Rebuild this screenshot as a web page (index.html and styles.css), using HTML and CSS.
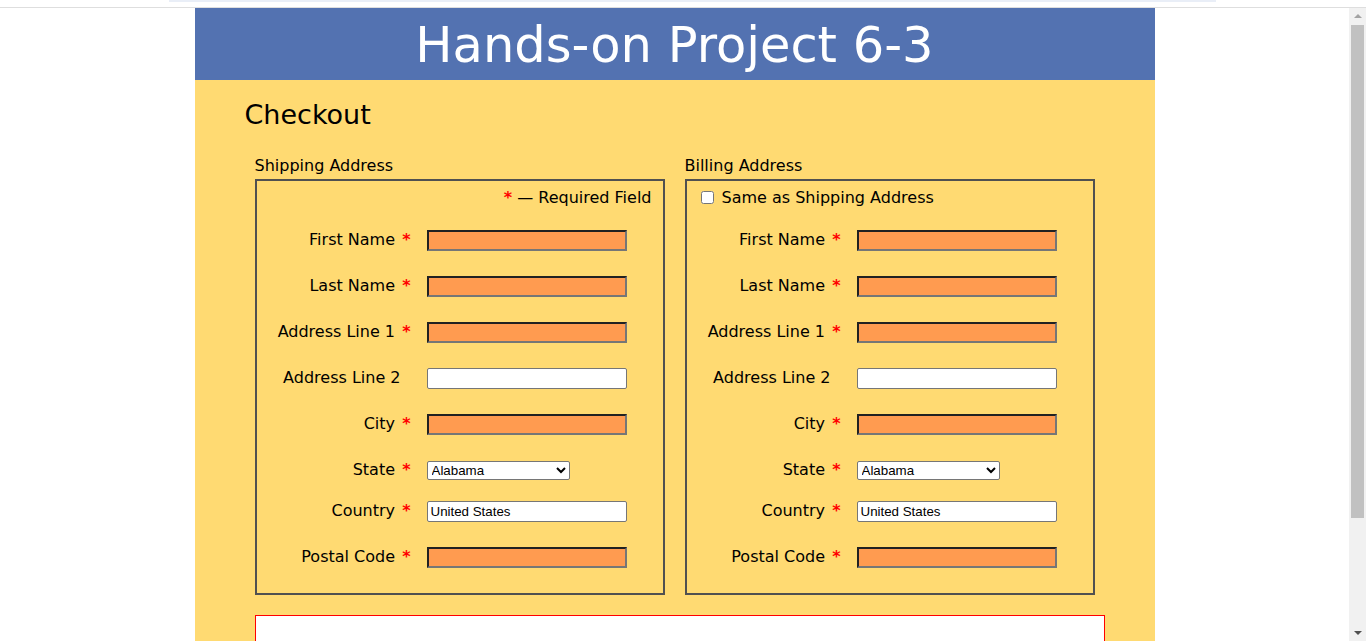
FILE: index.html
```html
<!DOCTYPE html>
<html lang="en">
<head>
<meta charset="utf-8">
<title>Hands-on Project 6-3</title>
<link rel="stylesheet" href="styles.css">
</head>
<body>
<div class="chrome"><div class="chrome-strip"></div></div>
<div class="viewport">
  <div class="page">
    <header class="banner">
      <h1>Hands-on Project 6-3</h1>
    </header>
    <main class="content">
      <h2 class="title">Checkout</h2>
      <form class="columns">
        <section class="col">
          <div class="legend">Shipping Address</div>
          <fieldset class="box">
            <div class="note"><span class="req">*</span> — Required Field</div>
            <div class="row"><label class="lbl">First Name <span class="req mark">*</span></label><input class="field invalid" type="text"></div>
            <div class="row"><label class="lbl">Last Name <span class="req mark">*</span></label><input class="field invalid" type="text"></div>
            <div class="row"><label class="lbl">Address Line 1 <span class="req mark">*</span></label><input class="field invalid" type="text"></div>
            <div class="row"><label class="lbl opt">Address Line 2</label><input class="field" type="text"></div>
            <div class="row"><label class="lbl">City <span class="req mark">*</span></label><input class="field invalid" type="text"></div>
            <div class="row row-select"><label class="lbl">State <span class="req mark">*</span></label><select class="state"><option>Alabama</option></select></div>
            <div class="row"><label class="lbl">Country <span class="req mark">*</span></label><input class="field" type="text" value="United States"></div>
            <div class="row row-last"><label class="lbl">Postal Code <span class="req mark">*</span></label><input class="field invalid" type="text"></div>
          </fieldset>
        </section>
        <section class="col">
          <div class="legend">Billing Address</div>
          <fieldset class="box">
            <div class="note note-check"><input class="check" type="checkbox"><span>Same as Shipping Address</span></div>
            <div class="row"><label class="lbl">First Name <span class="req mark">*</span></label><input class="field invalid" type="text"></div>
            <div class="row"><label class="lbl">Last Name <span class="req mark">*</span></label><input class="field invalid" type="text"></div>
            <div class="row"><label class="lbl">Address Line 1 <span class="req mark">*</span></label><input class="field invalid" type="text"></div>
            <div class="row"><label class="lbl opt">Address Line 2</label><input class="field" type="text"></div>
            <div class="row"><label class="lbl">City <span class="req mark">*</span></label><input class="field invalid" type="text"></div>
            <div class="row row-select"><label class="lbl">State <span class="req mark">*</span></label><select class="state"><option>Alabama</option></select></div>
            <div class="row"><label class="lbl">Country <span class="req mark">*</span></label><input class="field" type="text" value="United States"></div>
            <div class="row row-last"><label class="lbl">Postal Code <span class="req mark">*</span></label><input class="field invalid" type="text"></div>
          </fieldset>
        </section>
      </form>
      <div class="payment"></div>
    </main>
  </div>
  <div class="scrollbar">
    <span class="arrow arrow-up"></span>
    <div class="thumb"></div>
    <span class="arrow arrow-down"></span>
  </div>
</div>
</body>
</html>
```
FILE: styles.css
```css
html, body {
  margin: 0;
  padding: 0;
  height: 100%;
  overflow: hidden;
  background: #ffffff;
}

body {
  font-family: "DejaVu Sans", Verdana, sans-serif;
  font-size: 16px;
  color: #000;
}

.chrome {
  height: 7px;
  border-bottom: 1px solid #dedede;
  background: #fff;
  padding-left: 169px;
}

.chrome-strip {
  width: 1047px;
  height: 2px;
  background: #e9eef7;
}

.viewport {
  display: flex;
  height: 633px;
}

.page {
  flex: 1;
  overflow: hidden;
}

.banner {
  width: 960px;
  margin: 0 auto;
  background: #5372b1;
}

.banner h1 {
  margin: 0;
  padding: 9px 0 7px 0;
  font-size: 49.5px;
  line-height: 56px;
  font-weight: normal;
  color: #fff;
  text-align: center;
}

.content {
  width: 960px;
  margin: 0 auto;
  background: #ffda72;
  padding: 20px 50px 0 50px;
  box-sizing: border-box;
  height: 600px;
}

.title {
  margin: 0;
  font-size: 27px;
  line-height: 30px;
  font-weight: normal;
}

.columns {
  display: grid;
  grid-template-columns: 410px 410px;
  column-gap: 20px;
  margin: 26px 0 0 10px;
}

.legend {
  line-height: 19px;
  margin-bottom: 4px;
}

.box {
  margin: 0;
  border: 2px solid #505050;
  padding: 7px 11px 0 11px;
  min-width: 0;
}

.note {
  height: 19px;
  line-height: 19px;
  margin-bottom: 23px;
  text-align: right;
}

.note-check {
  display: flex;
  align-items: center;
  text-align: left;
}

.check {
  width: 13px;
  height: 13px;
  margin: 0 8px 0 3px;
}

.req {
  color: #ff0000;
  font-weight: bold;
}

.mark {
  margin-left: 2px;
}

.row {
  display: flex;
  align-items: baseline;
  height: 21px;
  margin-bottom: 25px;
}

.row-select {
  height: 19px;
  margin-bottom: 22px;
}

.row-last {
  margin-bottom: 25px;
}

.lbl {
  width: 143px;
  flex: none;
  text-align: right;
  line-height: 19px;
  margin-right: 16px;
}

.lbl.opt {
  padding-right: 10px;
  box-sizing: border-box;
}

.field {
  width: 200px;
  height: 21px;
  box-sizing: border-box;
  margin: 0;
  padding: 1px 3px;
  border: 1px solid #767676;
  border-radius: 2px;
  background: #fff;
  font-family: "Liberation Sans", Arial, sans-serif;
  font-size: 13.333px;
  color: #000;
}

.field.invalid {
  background: #ff9b50;
  border: 2px inset #767676;
  border-radius: 0;
}

.state {
  width: 143px;
  height: 19px;
  margin: 0;
  font-family: "Liberation Sans", Arial, sans-serif;
  font-size: 13.333px;
  color: #000;
  background: #fff;
  border: 1px solid #767676;
  border-radius: 2px;
}

.payment {
  width: 850px;
  height: 200px;
  margin: 20px 0 0 10px;
  box-sizing: border-box;
  border: 1px solid #ff0000;
  background: #fff;
}

.scrollbar {
  width: 17px;
  flex: none;
  background: #f1f1f1;
  display: flex;
  flex-direction: column;
  align-items: center;
}

.arrow {
  width: 0;
  height: 0;
  border-left: 4px solid transparent;
  border-right: 4px solid transparent;
}

.arrow-up {
  margin-top: 6px;
  border-bottom: 4px solid #a3a3a3;
}

.thumb {
  width: 13px;
  height: 493px;
  margin-top: 7px;
  background: #c1c1c1;
}

.arrow-down {
  margin-top: auto;
  margin-bottom: 6px;
  border-top: 4px solid #505050;
}
```
